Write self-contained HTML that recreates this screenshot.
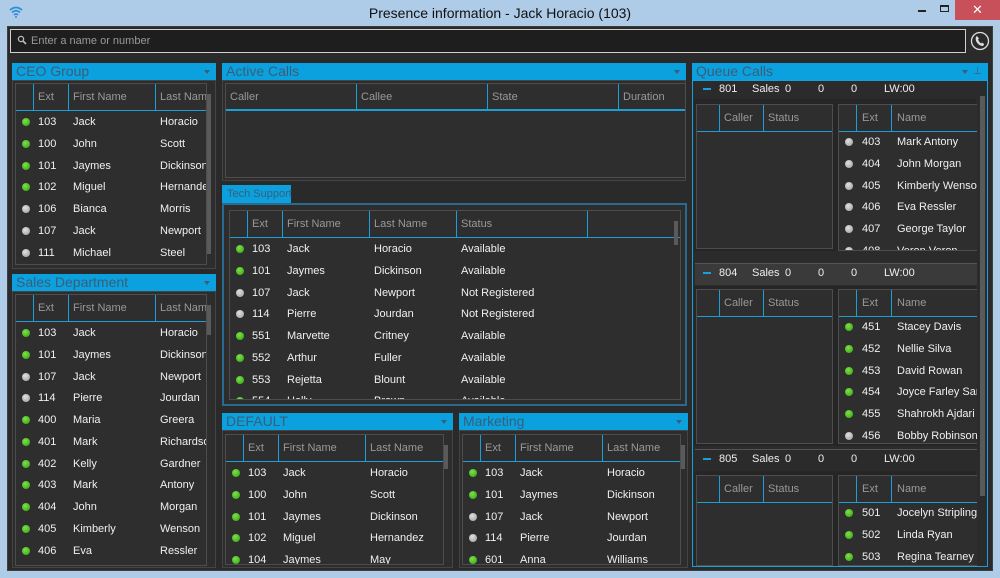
<!DOCTYPE html>
<html><head><meta charset="utf-8"><style>
*{box-sizing:border-box;margin:0;padding:0}
body{width:1000px;height:578px;background:#aecbe8;font-family:"Liberation Sans",sans-serif;position:relative;overflow:hidden}
.a{position:absolute}
#main{left:7px;top:26px;width:986px;height:545px;background:#2a2a2a;border:1px solid #3e3e3e}
.title{left:0;top:5px;width:1000px;text-align:center;font-size:14px;color:#111}
.hdr{position:absolute;background:#0ba1de;height:17px;color:#3a5e78;font-size:14px;line-height:17px;padding-left:4px}
.hdr b{position:absolute;right:6px;top:7px;width:0;height:0;border-left:3px solid transparent;border-right:3px solid transparent;border-top:4px solid #3a5e78}
.pb{position:absolute;background:#2d2d2d;border:1px solid #444}
.g{position:absolute;background:#2d2e2d;border:1px solid #4d4d4d;overflow:hidden}
.gh{position:absolute;left:0;right:0;top:0;height:27px;border-bottom:1px solid #1a9fd8}
.gh i{position:absolute;top:0;height:27px;border-left:1px solid #1a9fd8}
.gh span{position:absolute;top:7px;font-size:11px;color:#999;white-space:nowrap}
.r{position:absolute;left:0;right:0;height:22px;font-size:11px;color:#f0f0f0}
.r span{position:absolute;top:4px;white-space:nowrap}
.d{position:absolute;left:6px;top:6px;width:8px;height:8px;border-radius:50%;background:radial-gradient(circle at 40% 35%,#7de04a,#2fa00c)}
.d.o{background:radial-gradient(circle at 40% 35%,#e0e0e0,#9a9a9a)}
.c1{left:22px}.c2{left:57px}.c3{left:144px}.c4{left:231px}
.sb{position:absolute;width:4px;background:#5a5a5a}
.q{position:absolute;left:695px;width:282px;height:20px;font-size:11px;color:#eee}
.q span{position:absolute;top:3px}
.q em{position:absolute;left:8px;top:8px;width:8px;height:2px;background:#1a9fd8}
</style></head><body>
<svg class="a" style="left:9px;top:6px" width="14" height="12" viewBox="0 0 14 12"><path d="M1 4 Q7 -1 13 4" stroke="#2b8fd8" stroke-width="1.6" fill="none"/><path d="M3 6.5 Q7 3 11 6.5" stroke="#2b8fd8" stroke-width="1.6" fill="none"/><path d="M5 9 Q7 7 9 9" stroke="#2b8fd8" stroke-width="1.6" fill="none"/><circle cx="7" cy="11" r="1" fill="#2b8fd8"/></svg>
<div class="a title">Presence information - Jack Horacio (103)</div>
<div class="a" style="left:918px;top:10px;width:8px;height:2px;background:#222"></div>
<div class="a" style="left:940px;top:5px;width:9px;height:7px;border:1px solid #222;border-top-width:2px"></div>
<div class="a" style="left:955px;top:0;width:45px;height:20px;background:#c7505a;color:#fff;font-size:13px;text-align:center;line-height:19px">✕</div>
<div class="a" id="main"></div>
<div class="a" style="left:10px;top:29px;width:956px;height:24px;background:#1e1e1e;border:1px solid #d0d0d0;color:#999;font-size:11px;line-height:22px;padding-left:20px">Enter a name or number</div>
<svg class="a" style="left:17px;top:35px" width="10" height="10"><circle cx="4" cy="4" r="2.6" stroke="#bbb" stroke-width="1.3" fill="none"/><path d="M6 6 L9 9" stroke="#bbb" stroke-width="1.6"/></svg>
<svg class="a" style="left:970px;top:31px" width="20" height="20" viewBox="0 0 20 20"><circle cx="10" cy="10" r="8.5" stroke="#ddd" stroke-width="1.3" fill="none"/><path d="M7 5 Q5 6 6 10 Q8 14 12 15 Q14 15 14 13 L12 11.5 L11 12.5 Q9 11 8 8.5 L9 7.5 Z" fill="#ddd"/></svg>

<!-- CEO Group -->
<div class="hdr" style="left:12px;top:63px;width:204px">CEO Group<b></b></div>
<div class="pb" style="left:12px;top:80px;width:204px;height:189px"></div>
<div class="g" style="left:15px;top:83px;width:192px;height:182px">
<div class="gh"><i style="left:17px"></i><i style="left:52px"></i><i style="left:139px"></i><span class="c1">Ext</span><span class="c2">First Name</span><span class="c3">Last Name</span></div>
<div class="r" style="top:28px"><i class="d"></i><span class="c1">103</span><span class="c2">Jack</span><span class="c3">Horacio</span></div>
<div class="r" style="top:50px"><i class="d"></i><span class="c1">100</span><span class="c2">John</span><span class="c3">Scott</span></div>
<div class="r" style="top:72px"><i class="d"></i><span class="c1">101</span><span class="c2">Jaymes</span><span class="c3">Dickinson</span></div>
<div class="r" style="top:93px"><i class="d"></i><span class="c1">102</span><span class="c2">Miguel</span><span class="c3">Hernandez</span></div>
<div class="r" style="top:115px"><i class="d o"></i><span class="c1">106</span><span class="c2">Bianca</span><span class="c3">Morris</span></div>
<div class="r" style="top:137px"><i class="d o"></i><span class="c1">107</span><span class="c2">Jack</span><span class="c3">Newport</span></div>
<div class="r" style="top:159px"><i class="d o"></i><span class="c1">111</span><span class="c2">Michael</span><span class="c3">Steel</span></div>
</div>
<div class="sb" style="left:207px;top:94px;height:160px"></div>

<!-- Sales -->
<div class="hdr" style="left:12px;top:274px;width:204px">Sales Department<b></b></div>
<div class="pb" style="left:12px;top:291px;width:204px;height:277px"></div>
<div class="g" style="left:15px;top:294px;width:192px;height:272px">
<div class="gh"><i style="left:17px"></i><i style="left:52px"></i><i style="left:139px"></i><span class="c1">Ext</span><span class="c2">First Name</span><span class="c3">Last Name</span></div>
<div class="r" style="top:28px"><i class="d"></i><span class="c1">103</span><span class="c2">Jack</span><span class="c3">Horacio</span></div>
<div class="r" style="top:50px"><i class="d"></i><span class="c1">101</span><span class="c2">Jaymes</span><span class="c3">Dickinson</span></div>
<div class="r" style="top:72px"><i class="d o"></i><span class="c1">107</span><span class="c2">Jack</span><span class="c3">Newport</span></div>
<div class="r" style="top:93px"><i class="d o"></i><span class="c1">114</span><span class="c2">Pierre</span><span class="c3">Jourdan</span></div>
<div class="r" style="top:115px"><i class="d"></i><span class="c1">400</span><span class="c2">Maria</span><span class="c3">Greera</span></div>
<div class="r" style="top:137px"><i class="d"></i><span class="c1">401</span><span class="c2">Mark</span><span class="c3">Richardson</span></div>
<div class="r" style="top:159px"><i class="d"></i><span class="c1">402</span><span class="c2">Kelly</span><span class="c3">Gardner</span></div>
<div class="r" style="top:180px"><i class="d"></i><span class="c1">403</span><span class="c2">Mark</span><span class="c3">Antony</span></div>
<div class="r" style="top:202px"><i class="d"></i><span class="c1">404</span><span class="c2">John</span><span class="c3">Morgan</span></div>
<div class="r" style="top:224px"><i class="d"></i><span class="c1">405</span><span class="c2">Kimberly</span><span class="c3">Wenson</span></div>
<div class="r" style="top:246px"><i class="d"></i><span class="c1">406</span><span class="c2">Eva</span><span class="c3">Ressler</span></div>
</div>
<div class="sb" style="left:207px;top:305px;height:30px"></div>

<!-- Active Calls -->
<div class="hdr" style="left:222px;top:63px;width:464px">Active Calls<b></b></div>
<div class="pb" style="left:222px;top:80px;width:464px;height:101px"></div>
<div class="g" style="left:225px;top:83px;width:461px;height:95px">
<div class="gh" style="border-bottom-width:2px"><i style="left:130px"></i><i style="left:261px"></i><i style="left:392px"></i><span style="left:4px">Caller</span><span style="left:135px">Callee</span><span style="left:266px">State</span><span style="left:397px">Duration</span></div>
</div>

<!-- Tech Support -->
<div class="a" style="left:222px;top:185px;width:69px;height:18px;background:#0ba1de;color:#3a5e78;font-size:11px;line-height:18px;padding-left:5px;white-space:nowrap">Tech Support</div>
<div class="a" style="left:222px;top:203px;width:465px;height:203px;border:2px solid #2a6a8e;background:#2d2d2d"></div>
<div class="g" style="left:229px;top:210px;width:452px;height:190px">
<div class="gh"><i style="left:17px"></i><i style="left:52px"></i><i style="left:139px"></i><i style="left:226px"></i><i style="left:357px"></i><span class="c1">Ext</span><span class="c2">First Name</span><span class="c3">Last Name</span><span class="c4">Status</span></div>
<div class="r" style="top:28px"><i class="d"></i><span class="c1">103</span><span class="c2">Jack</span><span class="c3">Horacio</span><span class="c4">Available</span></div>
<div class="r" style="top:50px"><i class="d"></i><span class="c1">101</span><span class="c2">Jaymes</span><span class="c3">Dickinson</span><span class="c4">Available</span></div>
<div class="r" style="top:72px"><i class="d o"></i><span class="c1">107</span><span class="c2">Jack</span><span class="c3">Newport</span><span class="c4">Not Registered</span></div>
<div class="r" style="top:93px"><i class="d o"></i><span class="c1">114</span><span class="c2">Pierre</span><span class="c3">Jourdan</span><span class="c4">Not Registered</span></div>
<div class="r" style="top:115px"><i class="d"></i><span class="c1">551</span><span class="c2">Marvette</span><span class="c3">Critney</span><span class="c4">Available</span></div>
<div class="r" style="top:137px"><i class="d"></i><span class="c1">552</span><span class="c2">Arthur</span><span class="c3">Fuller</span><span class="c4">Available</span></div>
<div class="r" style="top:159px"><i class="d"></i><span class="c1">553</span><span class="c2">Rejetta</span><span class="c3">Blount</span><span class="c4">Available</span></div>
<div class="r" style="top:180px"><i class="d"></i><span class="c1">554</span><span class="c2">Holly</span><span class="c3">Brown</span><span class="c4">Available</span></div>
</div>
<div class="sb" style="left:674px;top:221px;height:24px"></div>

<!-- DEFAULT -->
<div class="hdr" style="left:222px;top:413px;width:231px">DEFAULT<b></b></div>
<div class="pb" style="left:222px;top:430px;width:231px;height:138px"></div>
<div class="g" style="left:225px;top:434px;width:219px;height:131px">
<div class="gh"><i style="left:17px"></i><i style="left:52px"></i><i style="left:139px"></i><span class="c1">Ext</span><span class="c2">First Name</span><span class="c3">Last Name</span></div>
<div class="r" style="top:28px"><i class="d"></i><span class="c1">103</span><span class="c2">Jack</span><span class="c3">Horacio</span></div>
<div class="r" style="top:50px"><i class="d"></i><span class="c1">100</span><span class="c2">John</span><span class="c3">Scott</span></div>
<div class="r" style="top:72px"><i class="d"></i><span class="c1">101</span><span class="c2">Jaymes</span><span class="c3">Dickinson</span></div>
<div class="r" style="top:93px"><i class="d"></i><span class="c1">102</span><span class="c2">Miguel</span><span class="c3">Hernandez</span></div>
<div class="r" style="top:115px"><i class="d"></i><span class="c1">104</span><span class="c2">Jaymes</span><span class="c3">May</span></div>
</div>
<div class="sb" style="left:444px;top:445px;height:24px"></div>

<!-- Marketing -->
<div class="hdr" style="left:459px;top:413px;width:229px">Marketing<b></b></div>
<div class="pb" style="left:459px;top:430px;width:229px;height:138px"></div>
<div class="g" style="left:462px;top:434px;width:219px;height:131px">
<div class="gh"><i style="left:17px"></i><i style="left:52px"></i><i style="left:139px"></i><span class="c1">Ext</span><span class="c2">First Name</span><span class="c3">Last Name</span></div>
<div class="r" style="top:28px"><i class="d"></i><span class="c1">103</span><span class="c2">Jack</span><span class="c3">Horacio</span></div>
<div class="r" style="top:50px"><i class="d"></i><span class="c1">101</span><span class="c2">Jaymes</span><span class="c3">Dickinson</span></div>
<div class="r" style="top:72px"><i class="d o"></i><span class="c1">107</span><span class="c2">Jack</span><span class="c3">Newport</span></div>
<div class="r" style="top:93px"><i class="d o"></i><span class="c1">114</span><span class="c2">Pierre</span><span class="c3">Jourdan</span></div>
<div class="r" style="top:115px"><i class="d"></i><span class="c1">601</span><span class="c2">Anna</span><span class="c3">Williams</span></div>
</div>
<div class="sb" style="left:681px;top:445px;height:24px"></div>

<!-- Queue Calls -->
<div class="hdr" style="left:692px;top:63px;width:296px">Queue Calls<b style="right:20px"></b><span style="position:absolute;right:6px;top:0;font-size:10px">⊥</span></div>
<div class="a" style="left:692px;top:80px;width:296px;height:487px;border:1px solid #1a9fd8;background:#2b2b2b"></div>
<div class="sb" style="left:980px;top:96px;height:400px;width:5px"></div>

<div class="q" style="top:80px"><em></em><span style="left:24px">801</span><span style="left:57px">Sales</span><span style="left:90px">0</span><span style="left:123px">0</span><span style="left:156px">0</span><span style="left:189px">LW:00</span></div>
<div class="a" style="left:694px;top:99px;width:282px;height:152px;background:#262626"></div>
<div class="g" style="left:696px;top:104px;width:137px;height:145px"><div class="gh"><i style="left:22px"></i><i style="left:66px"></i><span style="left:27px">Caller</span><span style="left:71px">Status</span></div></div>
<div class="g" style="left:838px;top:104px;width:139px;height:147px;border-right:none"><div class="gh"><i style="left:17px"></i><i style="left:52px"></i><span style="left:23px">Ext</span><span style="left:58px">Name</span></div>
<div class="r" style="top:27px"><i class="d o"></i><span style="left:23px">403</span><span style="left:58px">Mark Antony</span></div>
<div class="r" style="top:49px"><i class="d o"></i><span style="left:23px">404</span><span style="left:58px">John Morgan</span></div>
<div class="r" style="top:71px"><i class="d o"></i><span style="left:23px">405</span><span style="left:58px">Kimberly Wenson</span></div>
<div class="r" style="top:92px"><i class="d o"></i><span style="left:23px">406</span><span style="left:58px">Eva Ressler</span></div>
<div class="r" style="top:114px"><i class="d o"></i><span style="left:23px">407</span><span style="left:58px">George Taylor</span></div>
<div class="r" style="top:136px"><i class="d o"></i><span style="left:23px">408</span><span style="left:58px">Veron Veron</span></div>
</div>

<div class="q" style="top:263px;height:22px;background:#3a3a3a;border-top:1px solid #555"><em></em><span style="left:24px">804</span><span style="left:57px">Sales</span><span style="left:90px">0</span><span style="left:123px">0</span><span style="left:156px">0</span><span style="left:189px">LW:00</span></div>
<div class="a" style="left:694px;top:286px;width:282px;height:160px;background:#262626"></div>
<div class="g" style="left:696px;top:289px;width:137px;height:155px"><div class="gh"><i style="left:22px"></i><i style="left:66px"></i><span style="left:27px">Caller</span><span style="left:71px">Status</span></div></div>
<div class="g" style="left:838px;top:289px;width:139px;height:155px;border-right:none"><div class="gh"><i style="left:17px"></i><i style="left:52px"></i><span style="left:23px">Ext</span><span style="left:58px">Name</span></div>
<div class="r" style="top:27px"><i class="d"></i><span style="left:23px">451</span><span style="left:58px">Stacey Davis</span></div>
<div class="r" style="top:49px"><i class="d"></i><span style="left:23px">452</span><span style="left:58px">Nellie Silva</span></div>
<div class="r" style="top:71px"><i class="d"></i><span style="left:23px">453</span><span style="left:58px">David Rowan</span></div>
<div class="r" style="top:92px"><i class="d"></i><span style="left:23px">454</span><span style="left:58px">Joyce Farley San...</span></div>
<div class="r" style="top:114px"><i class="d"></i><span style="left:23px">455</span><span style="left:58px">Shahrokh Ajdari</span></div>
<div class="r" style="top:136px"><i class="d o"></i><span style="left:23px">456</span><span style="left:58px">Bobby Robinson</span></div>
</div>

<div class="q" style="top:449px;height:21px;border-top:1px solid #555"><em></em><span style="left:24px">805</span><span style="left:57px">Sales</span><span style="left:90px">0</span><span style="left:123px">0</span><span style="left:156px">0</span><span style="left:189px">LW:00</span></div>
<div class="a" style="left:694px;top:471px;width:282px;height:95px;background:#262626"></div>
<div class="g" style="left:696px;top:475px;width:137px;height:91px"><div class="gh"><i style="left:22px"></i><i style="left:66px"></i><span style="left:27px">Caller</span><span style="left:71px">Status</span></div></div>
<div class="g" style="left:838px;top:475px;width:139px;height:91px;border-right:none"><div class="gh"><i style="left:17px"></i><i style="left:52px"></i><span style="left:23px">Ext</span><span style="left:58px">Name</span></div>
<div class="r" style="top:27px"><i class="d"></i><span style="left:23px">501</span><span style="left:58px">Jocelyn Stripling</span></div>
<div class="r" style="top:49px"><i class="d"></i><span style="left:23px">502</span><span style="left:58px">Linda Ryan</span></div>
<div class="r" style="top:71px"><i class="d"></i><span style="left:23px">503</span><span style="left:58px">Regina Tearney</span></div>
</div>
</body></html>
